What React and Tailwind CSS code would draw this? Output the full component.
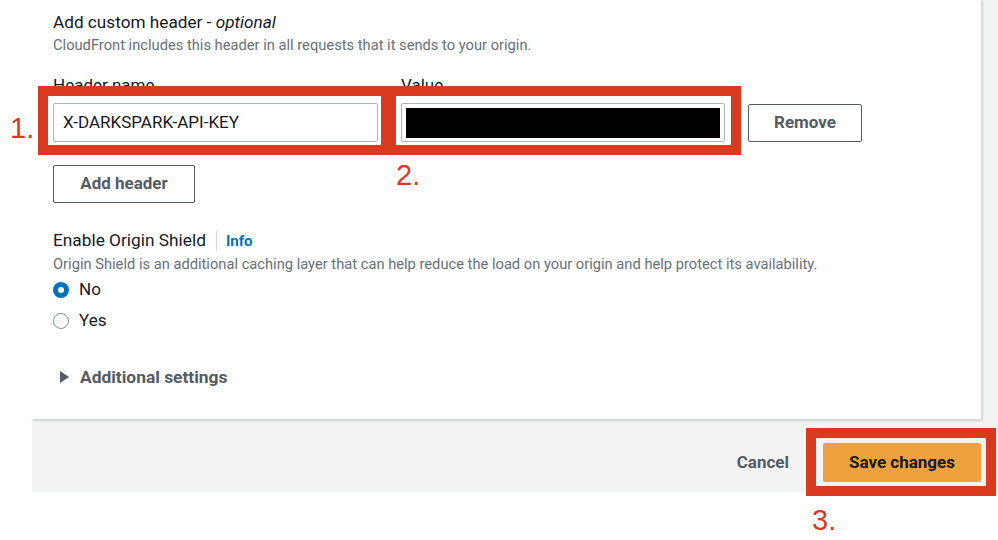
import React from 'react';

const RED = 'border-[#d9391f]';

const Mark = ({ children, className }) => (
  <div
    className={`absolute text-[29px] leading-none text-[#d9391f] ${className}`}
    style={{ fontFamily: '"Liberation Sans", Arial, sans-serif' }}
  >
    {children}
  </div>
);

const Radio = ({ checked, label }) => (
  <label className="flex h-[24px] items-center">
    <span
      className={
        checked
          ? 'box-border h-[16px] w-[16px] rounded-full border-[5px] border-[#0073bb] bg-white'
          : 'box-border h-[16px] w-[16px] rounded-full border-[1.5px] border-[#879596] bg-white'
      }
    />
    <span className="ml-[10px] text-[17px] text-[#16191f]">{label}</span>
  </label>
);

const App = () => {
  return (
    <div
      className="relative h-[540px] w-[998px] overflow-hidden bg-white"
      style={{ fontFamily: 'Roboto, "Noto Sans", sans-serif' }}
    >
      <div className="ml-[32px] w-[966px] bg-[#f2f3f3]">
        {/* Panel */}
        <div className="box-border h-[420px] w-[950px] border-r border-b border-[#d5dbdb] bg-white pl-[21px] pt-[12px] shadow-[1px_1px_2px_rgba(0,28,36,0.15)]">
          <div className="text-[17.2px] leading-[20px] text-[#16191f]">
            Add custom header - <i>optional</i>
          </div>
          <div className="mt-[3px] text-[14.7px] leading-[20px] text-[#687078]">
            CloudFront includes this header in all requests that it sends to your origin.
          </div>

          {/* Header row */}
          <div className="mt-[20px] flex items-end gap-[23px]">
            <div className="w-[325px]">
              <div className="text-[17px] leading-[20px] text-[#16191f]">Header name</div>
              <div className="mt-[8px] box-border flex h-[39px] items-center rounded-[2px] border border-[#aab7b8] bg-white px-[9px] text-[17px] text-[#16191f]">
                X-DARKSPARK-API-KEY
              </div>
            </div>
            <div className="w-[324px]">
              <div className="text-[17px] leading-[20px] text-[#16191f]">Value</div>
              <div className="mt-[8px] box-border flex h-[39px] items-center rounded-[2px] border border-[#aab7b8] bg-white px-[4px]">
                <div className="h-[30px] w-full bg-black" />
              </div>
            </div>
            <button className="box-border flex h-[38px] w-[114px] items-center justify-center rounded-[2px] border border-[#545b64] bg-white text-[17px] font-bold text-[#545b64]">
              Remove
            </button>
          </div>

          <button className="mt-[23px] box-border flex h-[38px] w-[142px] items-center justify-center rounded-[2px] border border-[#545b64] bg-white text-[17px] font-bold text-[#545b64]">
            Add header
          </button>

          {/* Origin Shield */}
          <div className="mt-[27px] flex h-[22px] items-center">
            <span className="text-[17.3px] text-[#16191f]">Enable Origin Shield</span>
            <span className="ml-[10px] h-[20px] w-px bg-[#d5dbdb]" />
            <span className="ml-[9px] text-[15px] font-bold text-[#0073bb]">Info</span>
          </div>
          <div className="mt-[2px] text-[14.7px] leading-[20px] text-[#687078]">
            Origin Shield is an additional caching layer that can help reduce the load on your origin and help protect its availability.
          </div>
          <div className="mt-[4px] flex flex-col gap-[7px]">
            <Radio checked label="No" />
            <Radio label="Yes" />
          </div>

          <div className="mt-[32px] flex h-[24px] items-center pl-[7px]">
            <svg width="9" height="12" viewBox="0 0 9 12">
              <path d="M0 0 L9 6 L0 12 Z" fill="#545b64" />
            </svg>
            <span className="ml-[11px] text-[17.4px] font-bold text-[#545b64]">Additional settings</span>
          </div>
        </div>

        {/* Footer */}
        <div className="flex h-[72px] items-start justify-end pr-[17px] pt-[23px]">
          <span className="mr-[34px] flex h-[39px] items-center text-[17px] font-bold text-[#545b64]">
            Cancel
          </span>
          <button className="box-border flex h-[39px] w-[158px] items-center justify-center rounded-[2px] bg-[#f0a03c] text-[17px] font-bold text-[#16191f]">
            Save changes
          </button>
        </div>
      </div>

      {/* Annotations */}
      <div className={`absolute left-[38px] top-[86px] h-[69px] w-[353px] border-[10px] ${RED}`} />
      <div className={`absolute left-[386px] top-[86px] h-[69px] w-[355px] border-[10px] ${RED}`} />
      <div className={`absolute left-[806px] top-[428px] h-[68px] w-[190px] border-[10px] ${RED}`} />
      <Mark className="left-[10px] top-[114px]">1.</Mark>
      <Mark className="left-[396px] top-[161px]">2.</Mark>
      <Mark className="left-[812px] top-[506px]">3.</Mark>
    </div>
  );
};

export default App;
